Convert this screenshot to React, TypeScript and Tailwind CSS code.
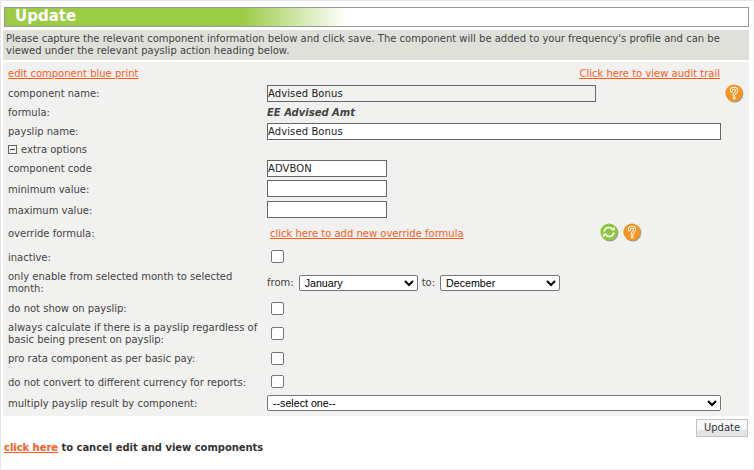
const months = ['January', 'February', 'March', 'April', 'May', 'June', 'July', 'August', 'September', 'October', 'November', 'December']

function HelpIcon() {
  return (
    <svg width="19" height="19" viewBox="0 0 19 19" className="shrink-0">
      <circle cx="9.800" cy="9.800" r="8.600" fill="#777" opacity="0.7" />
      <circle cx="9" cy="9" r="8.600" fill="#f7931e" />
      <path d="M6.300 7c0-1.700 1.200-2.700 2.800-2.700s2.700 1 2.700 2.400c0 1.900-2.700 2.100-2.700 4.300" fill="none" stroke="#fff" strokeWidth="3" strokeLinecap="round" />
      <circle cx="9.100" cy="14" r="1.500" fill="#fff" />
      <path d="M6.300 7c0-1.700 1.200-2.700 2.800-2.700s2.700 1 2.700 2.400c0 1.900-2.700 2.100-2.700 4.300" fill="none" stroke="#f7931e" strokeWidth="1.100" strokeLinecap="round" />
      <circle cx="9.100" cy="14" r="0.500" fill="#f7931e" />
    </svg>
  )
}

function RefreshIcon() {
  return (
    <svg width="19" height="19" viewBox="0 0 19 19" className="shrink-0">
      <circle cx="9.800" cy="9.800" r="8.600" fill="#777" opacity="0.7" />
      <circle cx="9" cy="9" r="8.600" fill="#8dc63f" />
      <path d="M4.200 8.500C4.600 6 6.500 4.500 9 4.500c1.300 0 2.300.4 3.100 1.200" fill="none" stroke="#fff" strokeWidth="1.600" />
      <path d="M10.600 7.300h4.100V3.400z" fill="#fff" transform="rotate(6 12 6)" />
      <path d="M13.800 9.500c-.4 2.500-2.300 4-4.800 4-1.300 0-2.300-.4-3.100-1.200" fill="none" stroke="#fff" strokeWidth="1.600" />
      <path d="M7.400 10.700H3.300v3.900z" fill="#fff" transform="rotate(6 6 12)" />
    </svg>
  )
}

function Row({ label, className, low, children }: { label: string; className: string; low?: boolean; children?: React.ReactNode }) {
  return (
    <div className={`flex items-center px-[5px] ${className}`}>
      <div className={`w-[259px] shrink-0 leading-[12px] ${low ? 'pt-[3px]' : 'pt-px'}`}>{label}</div>
      {children}
    </div>
  )
}

function TextBox({ value, className }: { value?: string; className: string }) {
  return (
    <input
      type="text"
      readOnly
      defaultValue={value}
      className={`h-[17px] border border-[#666] px-0 text-[10px] tracking-[0.1px] text-[#222] outline-none ${className}`}
    />
  )
}

function Check() {
  return <input type="checkbox" className="ml-[4px] h-[13px] w-[13px] appearance-none rounded-[2px] border border-[#767676] bg-white" />
}

export default function App() {
  const linkClass = 'text-[#ff5a1e] underline'

  return (
    <div className="h-[470px] w-[754px] overflow-hidden border-t border-l border-r border-b border-t-[#e9e4ec] border-l-[#e9e4ec] border-r-[#f1f1f1] border-b-[#f1f1f1] bg-white pl-[2px] pr-[4px] font-['DejaVu_Sans',Verdana,sans-serif] text-[10px] text-[#444]">
      {/* Title */}
      <div className="mt-[6px] ml-px h-[20px] border border-[#999] bg-[linear-gradient(to_right,#9ccc46_0%,#9ccc46_32%,#ffffff_46%)] pl-[10px] text-[15px] leading-[17px] font-bold text-white">
        Update
      </div>

      {/* Intro */}
      <div className="mt-[3px] h-[30px] bg-[#dfe0da] px-[3px] pt-[3px] leading-[12px]">
        Please capture the relevant component information below and click save. The component will be added to your frequency's profile and can be viewed under the relevant payslip action heading below.
      </div>

      {/* Form */}
      <div className="mt-[2px] h-[354px] bg-[#f1f1ef] pt-[3px]">
        <div className="flex h-[18px] items-center justify-between pr-[29px] pb-[2px] pl-[5px]">
          <a className={linkClass}>edit component blue print</a>
          <a className={linkClass}>Click here to view audit trail</a>
        </div>
        <Row label="component name:" className="h-[20px]">
          <TextBox value="Advised Bonus" className="w-[329px] bg-[#f1f1ef]" />
          <div className="ml-[129px]">
            <HelpIcon />
          </div>
        </Row>
        <Row label="formula:" className="h-[19px]">
          <span className="font-bold text-[#444] italic">EE Advised Amt</span>
        </Row>
        <Row label="payslip name:" className="h-[18px]">
          <TextBox value="Advised Bonus" className="w-[454px] bg-white" />
        </Row>
        <div className="flex h-[18px] items-center gap-[4px] px-[5px]">
          <span className="flex h-[9px] w-[9px] items-center justify-center border border-[#666]">
            <span className="h-px w-[5px] bg-[#444]" />
          </span>
          extra options
        </div>
        <Row label="component code" className="h-[20px]">
          <TextBox value="ADVBON" className="w-[120px] bg-white" />
        </Row>
        <Row label="minimum value:" className="h-[21px]" low>
          <TextBox className="w-[120px] bg-white" />
        </Row>
        <Row label="maximum value:" className="h-[21px]" low>
          <TextBox className="w-[120px] bg-white" />
        </Row>
        <Row label="override formula:" className="h-[26px]">
          <a className={`ml-[3px] ${linkClass}`}>click here to add new override formula</a>
          <div className="ml-[136px] flex -translate-y-px gap-[4px]">
            <RefreshIcon />
            <HelpIcon />
          </div>
        </Row>
        <Row label="inactive:" className="h-[21px]" low>
          <Check />
        </Row>
        <Row label="only enable from selected month to selected month:" className="h-[31px]">
          <span className="mr-[5px]">from:</span>
          <select defaultValue="January" className="h-[16px] w-[119px] rounded-[2px] border border-[#767676] bg-white pl-px font-['Liberation_Sans',Arial,sans-serif] text-[10.67px] text-black">
            {months.map((m) => (
              <option key={m}>{m}</option>
            ))}
          </select>
          <span className="mr-[5px] ml-[4px]">to:</span>
          <select defaultValue="December" className="h-[16px] w-[120px] rounded-[2px] border border-[#767676] bg-white pl-px font-['Liberation_Sans',Arial,sans-serif] text-[10.67px] text-black">
            {months.map((m) => (
              <option key={m}>{m}</option>
            ))}
          </select>
        </Row>
        <Row label="do not show on payslip:" className="h-[20px]">
          <Check />
        </Row>
        <Row label="always calculate if there is a payslip regardless of basic being present on payslip:" className="h-[31px]">
          <Check />
        </Row>
        <Row label="pro rata component as per basic pay:" className="h-[19px]">
          <Check />
        </Row>
        <Row label="do not convert to different currency for reports:" className="h-[27px]" low>
          <Check />
        </Row>
        <Row label="multiply payslip result by component:" className="h-[16px]">
          <select className="h-[16px] w-[454px] rounded-[2px] border border-[#767676] bg-white pl-px font-['Liberation_Sans',Arial,sans-serif] text-[10.67px] text-black">
            <option>--select one--</option>
          </select>
        </Row>
      </div>

      {/* Actions */}
      <div className="mt-[3px] mr-px flex justify-end">
        <button className="h-[18px] w-[52px] border border-[#c4c4c4] bg-[linear-gradient(to_bottom,#f7f7f7_0%,#f7f7f7_65%,#e4e4e4_65%)] text-[10px] leading-[14px] text-[#333]">
          Update
        </button>
      </div>
      <div className="mt-[3px] ml-px font-bold tracking-[-0.04px] text-[#333]">
        <a className={linkClass}>click here</a> to cancel edit and view components
      </div>
    </div>
  )
}
